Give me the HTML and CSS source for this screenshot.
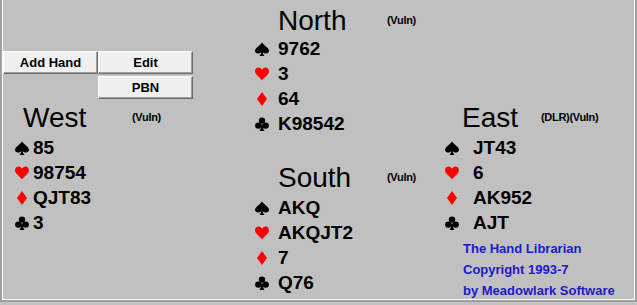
FILE: index.html
```html
<!DOCTYPE html>
<html lang="en">
<head>
    <meta charset="UTF-8">
    <title>The Hand Librarian</title>
    <link rel="stylesheet" href="styles.css">
</head>
<body>
    <div class="board">
        <div class="col col-left">
            <div class="buttons">
                <button class="btn">Add Hand</button>
                <button class="btn">Edit</button>
                <button class="btn btn-pbn">PBN</button>
            </div>
            <div class="hand hand-west">
                <div class="hand-head"><span class="hand-name">West</span><span class="hand-tag">(Vuln)</span></div>
                <div class="suit"><span class="pip"><svg width="14" height="14" viewBox="0 0 14 14"><path d="M7 0.5C5 3.5 0 5.8 0 8.8C0 10.6 1.4 11.6 3 11.6C4.4 11.6 5.5 10.9 6.3 9.9C6.1 11.6 5.5 12.8 4.4 14H9.6C8.5 12.8 7.9 11.6 7.7 9.9C8.5 10.9 9.6 11.6 11 11.6C12.6 11.6 14 10.6 14 8.8C14 5.8 9 3.5 7 0.5Z"/></svg></span><span class="cards">85</span></div>
                <div class="suit"><span class="pip red"><svg width="14" height="14" viewBox="0 0 14 14"><path d="M7 13.5C5 10.5 0 7.6 0 4.3C0 2 1.6 0.5 3.6 0.5C5.2 0.5 6.4 1.5 7 2.8C7.6 1.5 8.8 0.5 10.4 0.5C12.4 0.5 14 2 14 4.3C14 7.6 9 10.5 7 13.5Z"/></svg></span><span class="cards">98754</span></div>
                <div class="suit"><span class="pip red"><svg width="14" height="14" viewBox="0 0 14 14"><path d="M7 0L12 7L7 14L2 7Z"/></svg></span><span class="cards">QJT83</span></div>
                <div class="suit"><span class="pip"><svg width="14" height="14" viewBox="0 0 14 14"><circle cx="7" cy="3.6" r="3.2"/><circle cx="3.3" cy="8.6" r="3.2"/><circle cx="10.7" cy="8.6" r="3.2"/><path d="M6.2 7.5C6.2 11 5.6 12.6 4.4 14H9.6C8.4 12.6 7.8 11 7.8 7.5Z"/></svg></span><span class="cards">3</span></div>
            </div>
        </div>

        <div class="col col-mid">
            <div class="hand hand-north">
                <div class="hand-head"><span class="hand-name">North</span><span class="hand-tag">(Vuln)</span></div>
                <div class="suit"><span class="pip"><svg width="14" height="14" viewBox="0 0 14 14"><path d="M7 0.5C5 3.5 0 5.8 0 8.8C0 10.6 1.4 11.6 3 11.6C4.4 11.6 5.5 10.9 6.3 9.9C6.1 11.6 5.5 12.8 4.4 14H9.6C8.5 12.8 7.9 11.6 7.7 9.9C8.5 10.9 9.6 11.6 11 11.6C12.6 11.6 14 10.6 14 8.8C14 5.8 9 3.5 7 0.5Z"/></svg></span><span class="cards">9762</span></div>
                <div class="suit"><span class="pip red"><svg width="14" height="14" viewBox="0 0 14 14"><path d="M7 13.5C5 10.5 0 7.6 0 4.3C0 2 1.6 0.5 3.6 0.5C5.2 0.5 6.4 1.5 7 2.8C7.6 1.5 8.8 0.5 10.4 0.5C12.4 0.5 14 2 14 4.3C14 7.6 9 10.5 7 13.5Z"/></svg></span><span class="cards">3</span></div>
                <div class="suit"><span class="pip red"><svg width="14" height="14" viewBox="0 0 14 14"><path d="M7 0L12 7L7 14L2 7Z"/></svg></span><span class="cards">64</span></div>
                <div class="suit"><span class="pip"><svg width="14" height="14" viewBox="0 0 14 14"><circle cx="7" cy="3.6" r="3.2"/><circle cx="3.3" cy="8.6" r="3.2"/><circle cx="10.7" cy="8.6" r="3.2"/><path d="M6.2 7.5C6.2 11 5.6 12.6 4.4 14H9.6C8.4 12.6 7.8 11 7.8 7.5Z"/></svg></span><span class="cards">K98542</span></div>
            </div>
            <div class="hand hand-south">
                <div class="hand-head"><span class="hand-name">South</span><span class="hand-tag">(Vuln)</span></div>
                <div class="suit"><span class="pip"><svg width="14" height="14" viewBox="0 0 14 14"><path d="M7 0.5C5 3.5 0 5.8 0 8.8C0 10.6 1.4 11.6 3 11.6C4.4 11.6 5.5 10.9 6.3 9.9C6.1 11.6 5.5 12.8 4.4 14H9.6C8.5 12.8 7.9 11.6 7.7 9.9C8.5 10.9 9.6 11.6 11 11.6C12.6 11.6 14 10.6 14 8.8C14 5.8 9 3.5 7 0.5Z"/></svg></span><span class="cards">AKQ</span></div>
                <div class="suit"><span class="pip red"><svg width="14" height="14" viewBox="0 0 14 14"><path d="M7 13.5C5 10.5 0 7.6 0 4.3C0 2 1.6 0.5 3.6 0.5C5.2 0.5 6.4 1.5 7 2.8C7.6 1.5 8.8 0.5 10.4 0.5C12.4 0.5 14 2 14 4.3C14 7.6 9 10.5 7 13.5Z"/></svg></span><span class="cards">AKQJT2</span></div>
                <div class="suit"><span class="pip red"><svg width="14" height="14" viewBox="0 0 14 14"><path d="M7 0L12 7L7 14L2 7Z"/></svg></span><span class="cards">7</span></div>
                <div class="suit"><span class="pip"><svg width="14" height="14" viewBox="0 0 14 14"><circle cx="7" cy="3.6" r="3.2"/><circle cx="3.3" cy="8.6" r="3.2"/><circle cx="10.7" cy="8.6" r="3.2"/><path d="M6.2 7.5C6.2 11 5.6 12.6 4.4 14H9.6C8.4 12.6 7.8 11 7.8 7.5Z"/></svg></span><span class="cards">Q76</span></div>
            </div>
        </div>

        <div class="col col-right">
            <div class="hand hand-east">
                <div class="hand-head"><span class="hand-name">East</span><span class="hand-tag">(DLR)(Vuln)</span></div>
                <div class="suit"><span class="pip"><svg width="14" height="14" viewBox="0 0 14 14"><path d="M7 0.5C5 3.5 0 5.8 0 8.8C0 10.6 1.4 11.6 3 11.6C4.4 11.6 5.5 10.9 6.3 9.9C6.1 11.6 5.5 12.8 4.4 14H9.6C8.5 12.8 7.9 11.6 7.7 9.9C8.5 10.9 9.6 11.6 11 11.6C12.6 11.6 14 10.6 14 8.8C14 5.8 9 3.5 7 0.5Z"/></svg></span><span class="cards">JT43</span></div>
                <div class="suit"><span class="pip red"><svg width="14" height="14" viewBox="0 0 14 14"><path d="M7 13.5C5 10.5 0 7.6 0 4.3C0 2 1.6 0.5 3.6 0.5C5.2 0.5 6.4 1.5 7 2.8C7.6 1.5 8.8 0.5 10.4 0.5C12.4 0.5 14 2 14 4.3C14 7.6 9 10.5 7 13.5Z"/></svg></span><span class="cards">6</span></div>
                <div class="suit"><span class="pip red"><svg width="14" height="14" viewBox="0 0 14 14"><path d="M7 0L12 7L7 14L2 7Z"/></svg></span><span class="cards">AK952</span></div>
                <div class="suit"><span class="pip"><svg width="14" height="14" viewBox="0 0 14 14"><circle cx="7" cy="3.6" r="3.2"/><circle cx="3.3" cy="8.6" r="3.2"/><circle cx="10.7" cy="8.6" r="3.2"/><path d="M6.2 7.5C6.2 11 5.6 12.6 4.4 14H9.6C8.4 12.6 7.8 11 7.8 7.5Z"/></svg></span><span class="cards">AJT</span></div>
            </div>
            <div class="credits">
                <div>The Hand Librarian</div>
                <div>Copyright 1993-7</div>
                <div>by Meadowlark Software</div>
            </div>
        </div>
    </div>
</body>
</html>
```

FILE: styles.css
```css
* {
    margin: 0;
    padding: 0;
    box-sizing: border-box;
    font-family: "Liberation Sans", Arial, sans-serif;
}

body {
    background: #c0c0c0;
    width: 637px;
    height: 305px;
    overflow: hidden;
}

.board {
    width: 637px;
    height: 302px;
    display: flex;
    background: #c0c0c0;
    border-left: 2px solid #a0a0a0;
    border-right: 2px solid #a0a0a0;
    border-bottom: 2px solid #a0a0a0;
    box-shadow: inset 1px 0 #ffffff, inset -1px 0 #ffffff, inset 0 -1px #ffffff;
}

.col {
    display: flex;
    flex-direction: column;
}

.col-left {
    width: 253px;
    padding-top: 51px;
    padding-left: 1px;
}

.col-mid {
    width: 190px;
    padding-top: 7px;
}

.col-right {
    flex: 1;
    padding-top: 104px;
}

/* buttons */
.buttons {
    display: grid;
    grid-template-columns: 95px 95px;
    grid-auto-rows: 23px;
    gap: 2px 0;
}

.btn {
    background: #f0f0f0;
    border: 1px solid;
    border-color: #ffffff #6a6a6a #6a6a6a #ffffff;
    box-shadow: inset -1px -1px #a0a0a0;
    font-size: 13px;
    font-weight: bold;
    color: #000;
    text-align: center;
}

.btn-pbn {
    grid-column: 2;
}

/* hands */
.hand-head {
    display: flex;
    align-items: flex-start;
    height: 28px;
    margin-bottom: 3px;
}

.hand-name {
    font-size: 28px;
    line-height: 28px;
    color: #000;
}

.hand-tag {
    font-size: 11px;
    line-height: 11px;
    font-weight: bold;
    margin-top: 8px;
    letter-spacing: -0.3px;
}

.suit {
    display: flex;
    align-items: center;
    height: 25px;
}

.pip {
    display: flex;
    align-items: center;
}

.pip svg {
    fill: #000;
}

.pip.red svg {
    fill: #ff0000;
}

.cards {
    font-size: 19px;
    line-height: 25px;
    font-weight: bold;
    color: #000;
}

.hand-west {
    margin-top: 5px;
    margin-left: 12px;
}

.hand-west .hand-head { padding-left: 8px; }
.hand-west .hand-name { width: 109px; }
.hand-west .pip { width: 18px; }

.hand-north .hand-head,
.hand-south .hand-head { padding-left: 23px; }
.hand-north .hand-head { margin-bottom: 1px; }
.hand-north .hand-name,
.hand-south .hand-name { width: 109px; }
.hand-north .pip,
.hand-south .pip { width: 23px; }

.hand-south {
    margin-top: 28px;
}

.hand-east .hand-head { padding-left: 17px; }
.hand-east .hand-name { width: 79px; }
.hand-east .pip { width: 28px; }

.credits {
    margin-top: 3px;
    padding-left: 18px;
    font-size: 13px;
    line-height: 21px;
    font-weight: bold;
    color: #1a1acc;
}
```
